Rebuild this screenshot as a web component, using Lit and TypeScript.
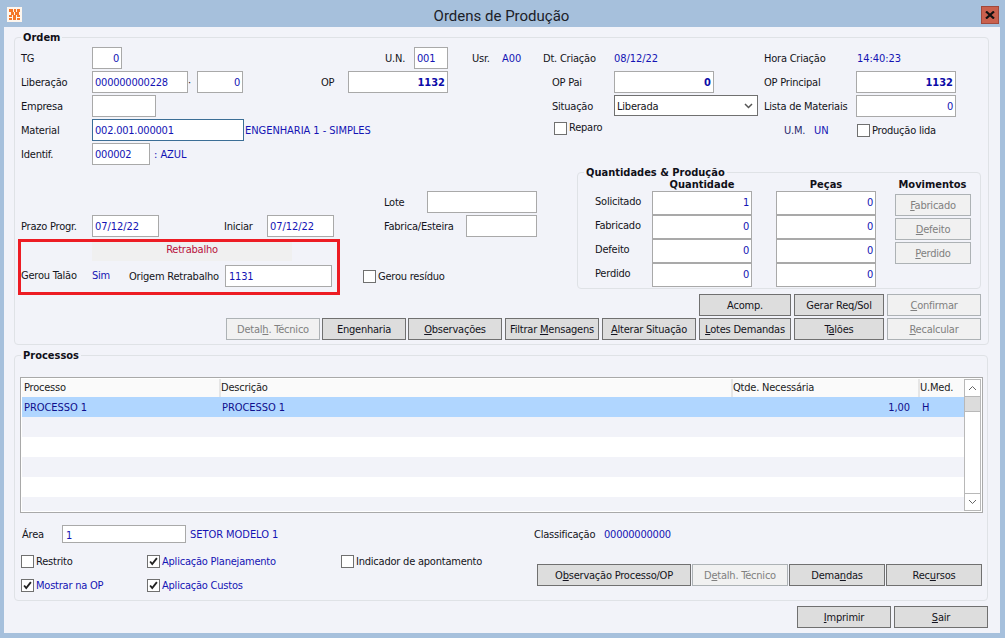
import { LitElement, html, css, svg } from "lit";
import { customElement } from "lit/decorators.js";

type Cell = { k: string; w?: number; t?: any; c?: string };
const L = (w: number, t: string, c = ""): Cell => ({ k: "lbl", w, t, c });
const V = (w: number, t: string, c = ""): Cell => ({ k: "val", w, t, c });
const I = (w: number, t = "", c = ""): Cell => ({ k: "inp", w, t, c });
const G = (w: number): Cell => ({ k: "gap", w });
const C = (w: number, t: string, c = ""): Cell => ({ k: "chk", w, t, c });
const S = (w: number, t: string): Cell => ({ k: "sel", w, t });

const topRows: Cell[][] = [
  [L(71, "TG"), I(30, "0", "r"), G(263), L(29, "U.N."), I(34, "001"), G(24), L(30, "Usr."), V(41, "A00", "caps"), L(71, "Dt. Criação"), V(150, "08/12/22", "caps"), L(93, "Hora Criação"), V(80, "14:40:23", "caps")],
  [L(71, "Liberação"), I(96, "000000000228"), L(9, "·"), I(46, "0", "r"), G(78), L(27, "OP"), I(100, "1132", "r b"), G(104), L(62, "OP Pai"), I(100, "0", "r b"), G(50), L(92, "OP Principal"), I(100, "1132", "r b")],
  [L(71, "Empresa"), I(64), G(396), L(62, "Situação"), S(144, "Liberada"), G(6), L(92, "Lista de Materiais"), I(100, "0", "r")],
  [L(71, "Material"), I(152, "002.001.000001", "focus"), G(1), V(309, "ENGENHARIA 1 - SIMPLES", "caps"), C(230, "Reparo", "raise"), L(30, "U.M.", "navy"), V(43, "UN", "caps"), C(110, "Produção lida")],
  [L(71, "Identif."), I(58, "000002"), G(4), V(80, ": AZUL", "caps")],
];

const midRows: Cell[][] = [
  [G(363), L(43, "Lote"), I(110)],
  [L(71, "Prazo Progr."), I(67, "07/12/22", "caps"), G(65), L(43, "Iniciar"), I(67, "07/12/22", "caps"), G(50), L(82, "Fabrica/Esteira"), I(71)],
];
const geraRow: Cell[] = [L(71, "Gerou Talão", "raise"), V(37, "Sim", "raise"), L(96, "Origem Retrabalho"), I(107, "1131", "tall-pad"), G(31), C(120, "Gerou resíduo")];

const qty: [string, string, string][] = [["Solicitado", "1", "0"], ["Fabricado", "0", "0"], ["Defeito", "0", "0"], ["Perdido", "0", "0"]];

type Btn = { w: number; t: any; off?: boolean; ml?: number };
const u = (a: string, b: string, c: string) => html`${a}<u>${b}</u>${c}`;
const act1: Btn[] = [
  { w: 92, t: "Acomp." },
  { w: 90, t: "Gerar Req/Sol" },
  { w: 94, t: u("", "C", "onfirmar"), off: true },
];
const act2: Btn[] = [
  { w: 94, t: u("Detal", "h", ". Técnico"), off: true },
  { w: 84, t: "Engenharia", ml: 2 },
  { w: 94, t: u("", "O", "bservações"), ml: 2 },
  { w: 94, t: u("Filtrar ", "M", "ensagens") },
  { w: 94, t: u("", "A", "lterar Situação") },
  { w: 92, t: u("", "L", "otes Demandas") },
  { w: 90, t: u("T", "a", "lões") },
  { w: 94, t: u("", "R", "ecalcular"), off: true },
];
const moves: Btn[] = [
  { w: 76, t: u("", "F", "abricado"), off: true },
  { w: 76, t: u("", "D", "efeito"), off: true },
  { w: 76, t: u("", "P", "erdido"), off: true },
];
const procBtns: Btn[] = [
  { w: 154, t: u("O", "b", "servação Processo/OP") },
  { w: 96, t: u("D", "e", "talh. Técnico"), off: true },
  { w: 96, t: u("Dema", "n", "das") },
  { w: 96, t: u("Rec", "u", "rsos") },
];
const footBtns: Btn[] = [
  { w: 94, t: u("", "I", "mprimir") },
  { w: 94, t: u("", "S", "air") },
];

const tick = svg`<path d="M2.5 6.5 L5 9.5 L10.5 2.5" fill="none" stroke="#222" stroke-width="2.2"/>`;

@customElement("app-root")
export class AppRoot extends LitElement {
  static styles = css`
    :host {
      display: block;
      width: 1005px;
      height: 638px;
      box-sizing: border-box;
      background: #a6c0dc;
      font: 11px "DejaVu Sans Condensed", "Liberation Sans", Arial, sans-serif;
      letter-spacing: -0.22px;
      color: #141420;
      overflow: hidden;
    }
    .title { height: 27px; display: flex; align-items: center; position: relative; padding: 0 6px 0 7px; }
    .title .icon { width: 15px; height: 15px; display: block; margin-top: 2px; }
    .title h1 { flex: 1; margin: 4px 0 0; font: 400 15px Roboto, sans-serif; letter-spacing: 0; color: #1c2128; text-align: center; }
    .close { width: 18px; height: 18px; box-sizing: border-box; background: #c9604e; border: 1px solid #a0483c; display: flex; align-items: center; justify-content: center; margin-top: 3px; }
    .close svg { display: block; }
    .client { margin: 0 5px 0 4px; height: 606px; background: #f2f3f9; padding: 10px 0 0 10px; box-sizing: border-box; }

    .panel { position: relative; border: 1px solid #dfe2e6; border-radius: 4px; box-sizing: border-box; }
    .legend { position: absolute; top: -7px; left: 6px; padding: 0 2px; background: #f2f3f9; font-weight: 700; letter-spacing: 0; line-height: 14px; color: #101018; }

    .ordem { width: 975px; height: 308px; padding: 9px 7px 0 6px; }
    .processos { width: 974px; height: 246px; margin-top: 10px; padding: 21px 4px 0 5px; }

    .rows { display: flex; flex-direction: column; gap: 2px; }
    .row { display: flex; height: 22px; align-items: center; flex: none; }
    .c { flex: none; white-space: nowrap; box-sizing: border-box; }
    .lbl.navy { color: #28286e; }
    .val { color: #1414b4; }
    .caps { letter-spacing: -0.05px; }
    .raise { align-self: flex-start; padding-top: 4px; line-height: 14px; }
    .inp {
      height: 22px;
      background: #fff;
      border: 1px solid #a9a9a9;
      color: #1414b4;
      padding: 0 2px;
      line-height: 21px;
      overflow: hidden;
    }
    .inp.r { text-align: right; }
    .inp.b { font-weight: 700; color: #0c0ca8; letter-spacing: 0; }
    .inp.focus { border-color: #3c6e96; }
    .inp.tall-pad { padding-left: 3px; line-height: 22px; }
    .sel {
      height: 21px;
      align-self: flex-start;
      background: #fff;
      border: 1px solid #707070;
      display: flex;
      align-items: center;
      justify-content: space-between;
      padding: 1px 4px 0 2px;
      color: #141420;
    }
    .chk { display: flex; align-items: center; gap: 2px; }
    .chk.raise { padding-top: 0; margin-top: 2px; align-self: flex-start; }
    .box { width: 13px; height: 13px; box-sizing: border-box; background: #fff; border: 1px solid #707070; flex: none; display: block; }

    .mid { display: flex; height: 117px; margin-top: 7px; }
    .mid-left { width: 556px; flex: none; padding-top: 19px; box-sizing: border-box; }
    .band-row { display: flex; margin-top: 3px; height: 21px; padding-left: 71px; }
    .band { width: 200px; background: #f0f0f0; color: #b8103c; text-align: center; line-height: 20px; }
    .gera { margin-top: 4px; }
    .redbox { position: absolute; left: 3px; top: 201px; width: 322px; height: 56px; box-sizing: border-box; border: 3px solid #ed1c24; pointer-events: none; }

    .qty { width: 404px; height: 117px; flex: none; display: flex; padding: 5px 0 0 17px; }
    .qty-grid { display: grid; grid-template-columns: 57px 100px 24px 100px; width: 281px; grid-template-rows: 13px; grid-auto-rows: 24px; }
    .qty-head { font-weight: 700; letter-spacing: 0; text-align: center; color: #101018; line-height: 13px; height: 13px; }
    .qty-grid .lbl { line-height: 22px; }
    .moves { margin-left: 19px; width: 76px; display: flex; flex-direction: column; gap: 2px; }
    .moves .qty-head { height: 14px; margin: 0 -6px 0 -7px; line-height: 13px; white-space: nowrap; }

    .actions { display: flex; flex-direction: column; align-items: flex-end; gap: 2px; margin-top: 5px; }
    .btns { display: flex; }
    .btn {
      height: 22px;
      box-sizing: border-box;
      background: #dddddd;
      border: 1px solid #707070;
      color: #141420;
      display: flex;
      align-items: center;
      justify-content: center;
      white-space: pre;
      flex: none;
    }
    .btn.off { background: #f1f1f1; border-color: #adb2b5; color: #808080; }
    u { text-underline-offset: 1px; }

    .grid { width: 963px; height: 136px; box-sizing: border-box; border: 1px solid #a9a9a9; padding: 1px; display: flex; background: #fff; }
    .table { width: 942px; flex: none; overflow: hidden; }
    .tr { display: grid; grid-template-columns: 197px 512px 187px 46px; height: 20px; }
    .th { height: 18px; background: #fafafa; }
    .th div { border-left: 2px solid #e6e6e6; line-height: 17px; color: #222; }
    .th div:first-child { border-left: 0; padding-left: 2px; }
    .tr .cell { color: #1414b4; line-height: 21px; padding-left: 3px; letter-spacing: -0.05px; }
    .tr .cell:first-child { padding-left: 2px; }
    .tr .cell.n { text-align: right; padding-right: 8px; }
    .tr .cell.h { padding-left: 4px; }
    .tr.sel-row { background: #b0d6ff; }
    .tr.sel-row .cell { color: #0f0f8c; }
    .tr.alt { background: #f2f3f9; }
    .scroll { width: 17px; flex: none; border: 1px solid #b8b8b8; box-sizing: border-box; display: flex; flex-direction: column; }
    .sb { height: 16px; display: flex; align-items: center; justify-content: center; flex: none; background: #fff; }
    .sb.thumb { background: #dcdcdc; border: 1px solid #b8b8b8; border-width: 1px 0; height: 16px; box-sizing: border-box; }
    .sb svg { display: block; }
    .sp { flex: 1; }
    .sb.dn { border-top: 1px solid #b8b8b8; }

    .area { display: flex; height: 18px; align-items: center; margin-top: 12px; }
    .area .inp { height: 18px; line-height: 19px; padding-left: 3px; }
    .lower { display: flex; margin-top: 12px; }
    .checks { width: 516px; margin-left: 1px; flex: none; display: grid; grid-template-columns: 126px 194px 196px; grid-auto-rows: 13px; row-gap: 11px; }
    .checks .chk.blue { color: #1414b4; }
    .lower .btns { margin-top: 9px; gap: 1px; }
    .foot { display: flex; justify-content: flex-end; gap: 3px; width: 974px; margin-top: 5px; }
  `;

  private cell(c: Cell) {
    const w = `width:${c.w}px`;
    if (c.k === "gap") return html`<div class="c" style=${w}></div>`;
    if (c.k === "chk") return this.check(c.t, false, c.c ?? "", c.w);
    if (c.k === "sel")
      return html`<div class="c sel" style=${w}>
        <span>${c.t}</span>
        <svg width="9" height="6" viewBox="0 0 9 6"><path d="M1 1 L4.5 4.5 L8 1" fill="none" stroke="#555" stroke-width="1.5"/></svg>
      </div>`;
    return html`<div class="c ${c.k} ${c.c ?? ""}" style=${w}>${c.t}</div>`;
  }

  private check(t: string, on = false, cls = "", w?: number) {
    return html`<div class="c chk ${cls}" style=${w ? `width:${w}px` : ""}>
      <svg class="box" viewBox="0 0 13 13">${on ? tick : ""}</svg><span>${t}</span>
    </div>`;
  }

  private btn(b: Btn, ml = 0) {
    const m = b.ml ?? ml;
    return html`<div class="btn ${b.off ? "off" : ""}" style="width:${b.w}px;margin-left:${m}px"><span>${b.t}</span></div>`;
  }

  private row(cells: Cell[], cls = "") {
    return html`<div class="row ${cls}">${cells.map((c) => this.cell(c))}</div>`;
  }

  render() {
    return html`
      <div class="title">
        <svg class="icon" viewBox="0 0 15 15">
          <rect width="15" height="15" fill="#fdf6ee"/>
          <g fill="#f4762a">
            <rect x="2" y="2" width="4" height="3"/><rect x="7" y="2" width="2" height="3"/><rect x="10" y="2" width="3" height="3"/>
            <rect x="4" y="5" width="3" height="3"/><rect x="8" y="5" width="4" height="3"/>
            <rect x="2" y="8" width="3" height="2"/><rect x="6" y="8" width="3" height="3"/><rect x="10" y="8" width="3" height="2"/>
            <rect x="2" y="11" width="3" height="2"/><rect x="6" y="11" width="3" height="2"/><rect x="10" y="11" width="3" height="2"/>
          </g>
        </svg>
        <h1>Ordens de Produção</h1>
        <div class="close">
          <svg width="10" height="8" viewBox="0 0 10 8"><path d="M1 0.5 L9 7.5 M9 0.5 L1 7.5" stroke="#111" stroke-width="2.2"/></svg>
        </div>
      </div>
      <div class="client">
        <div class="panel ordem">
          <div class="legend">Ordem</div>
          <div class="rows">${topRows.map((r) => this.row(r))}</div>
          <div class="mid">
            <div class="mid-left">
              <div class="rows">${midRows.map((r) => this.row(r))}</div>
              <div class="band-row"><div class="band">Retrabalho</div></div>
              ${this.row(geraRow, "gera")}
            </div>
            <div class="panel qty">
              <div class="legend">Quantidades &amp; Produção</div>
              <div class="qty-grid">
                <div></div><div class="qty-head">Quantidade</div><div></div><div class="qty-head">Peças</div>
                ${qty.map(
                  ([l, a, b]) => html`
                    <div class="lbl">${l}</div>
                    <div class="inp r">${a}</div>
                    <div></div>
                    <div class="inp r">${b}</div>
                  `
                )}
              </div>
              <div class="moves">
                <div class="qty-head">Movimentos</div>
                ${moves.map((m) => this.btn(m))}
              </div>
            </div>
          </div>
          <div class="actions">
            <div class="btns">${act1.map((b, i) => this.btn(b, i ? 3 : 0))}</div>
            <div class="btns">${act2.map((b, i) => this.btn(b, i ? 3 : 0))}</div>
          </div>
          <div class="redbox"></div>
        </div>

        <div class="panel processos">
          <div class="legend">Processos</div>
          <div class="grid">
            <div class="table">
              <div class="tr th"><div>Processo</div><div>Descrição</div><div>Qtde. Necessária</div><div>U.Med.</div></div>
              <div class="tr sel-row">
                <div class="cell">PROCESSO 1</div><div class="cell">PROCESSO 1</div><div class="cell n">1,00</div><div class="cell h">H</div>
              </div>
              <div class="tr alt"></div>
              <div class="tr"></div>
              <div class="tr alt"></div>
              <div class="tr"></div>
              <div class="tr alt"></div>
            </div>
            <div class="scroll">
              <div class="sb"><svg width="9" height="6" viewBox="0 0 9 6"><path d="M1 5 L4.5 1.5 L8 5" fill="none" stroke="#666" stroke-width="1"/></svg></div>
              <div class="sb thumb"></div>
              <div class="sp"></div>
              <div class="sb dn"><svg width="9" height="6" viewBox="0 0 9 6"><path d="M1 1 L4.5 4.5 L8 1" fill="none" stroke="#666" stroke-width="1"/></svg></div>
            </div>
          </div>
          ${this.row([G(2), L(40, "Área"), I(124, "1"), G(4), V(344, "SETOR MODELO 1", "caps"), L(70, "Classificação"), V(100, "00000000000")], "area")}
          <div class="lower">
            <div class="checks">
              ${this.check("Restrito")}
              ${this.check("Aplicação Planejamento", true, "blue")}
              ${this.check("Indicador de apontamento")}
              ${this.check("Mostrar na OP", true, "blue")}
              ${this.check("Aplicação Custos", true, "blue")}
            </div>
            <div class="btns">${procBtns.map((b) => this.btn(b))}</div>
          </div>
        </div>
        <div class="foot">${footBtns.map((b) => this.btn(b))}</div>
      </div>
    `;
  }
}
